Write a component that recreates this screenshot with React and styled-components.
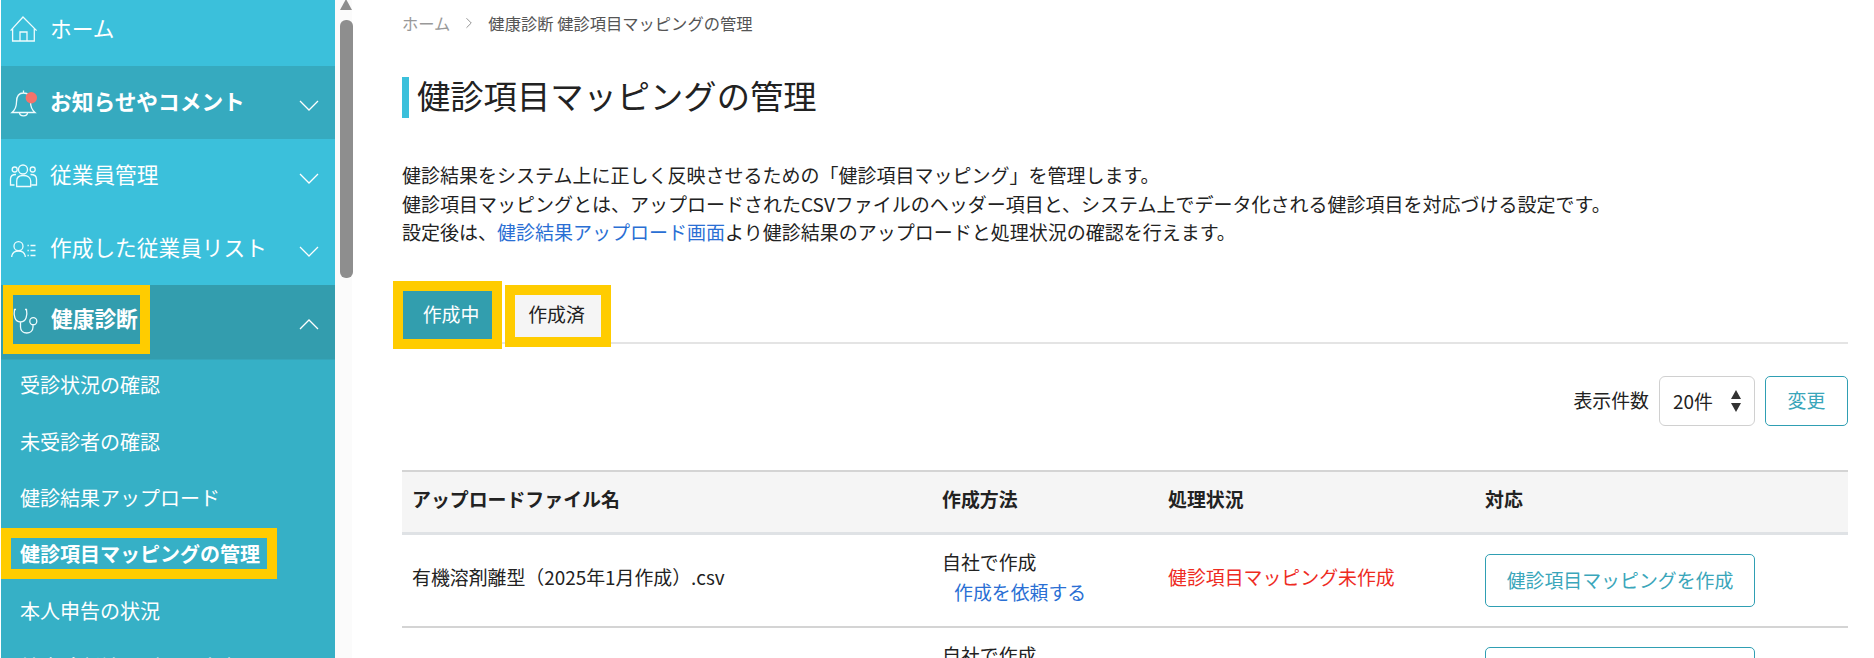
import React from 'react';
import styled, { createGlobalStyle } from 'styled-components';
import { ChevronRight } from 'lucide-react';

const GlobalStyle = createGlobalStyle`
    html, body {
        margin: 0;
        padding: 0;
        height: 658px;
        overflow: hidden;
        background: #fff;
        font-family: "Noto Sans CJK JP", "Noto Sans", sans-serif;
        color: #222;
    }
    * {
        box-sizing: border-box;
    }
`;

const Page = styled.div`
    display: flex;
    height: 658px;
    overflow: hidden;
    padding-left: 1px;
`;

const Sidebar = styled.nav`
    width: 334px;
    flex-shrink: 0;
    background: #3bc0db;
    overflow: hidden;
`;

const NavItem = styled.div`
    display: flex;
    align-items: center;
    height: ${props => props.height || 73}px;
    padding: 0 16px ${props => props.raise || 0}px 8px;
    color: #fff;
    font-size: 21.7px;
    font-weight: ${props => props.bold ? 700 : 400};
    background: ${props => props.background || 'transparent'};
`;

const NavIcon = styled.svg`
    width: 30px;
    height: 30px;
    flex-shrink: 0;
    margin-right: ${props => props.gap ?? 11}px;
    overflow: visible;
    fill: none;
    stroke: #eefbfd;
    stroke-width: 1.3;
`;

const NavLabel = styled.span`
    flex: 1;
    padding-bottom: 5px;
    white-space: nowrap;
`;

const Chevron = styled.svg`
    width: 20px;
    height: 11px;
    flex-shrink: 0;
    margin-top: 5px;
    fill: none;
    stroke: #fff;
    stroke-width: 1.3;
`;

const HighlightRow = styled.div`
    display: flex;
    align-items: center;
    flex: 1;
    height: 100%;
`;

const HighlightBox = styled.div`
    display: flex;
    align-items: center;
    border: 10px solid #ffcc00;
    width: 147px;
    height: 69px;
    margin: 0 0 5px -6px;
    white-space: nowrap;
`;

const SubList = styled.div`
    background: #36b0c6;
    border-top: 1px solid #35a6ba;
`;

const SubItem = styled.div`
    display: flex;
    align-items: center;
    height: 56.4px;
    padding: 0 0 7px 19px;
    color: #fff;
    font-size: 20px;
    white-space: nowrap;
`;

const SubHighlight = styled.span`
    border: 10px solid #ffcc00;
    margin-left: -19px;
    padding: 0 0 0 9px;
    width: 276px;
    height: 51px;
    display: flex;
    align-items: center;
    font-weight: 700;
    white-space: nowrap;
`;

const Scrollbar = styled.div`
    position: relative;
    width: 17px;
    flex-shrink: 0;
    background: #fbfbfb;
`;

const ScrollThumb = styled.div`
    position: absolute;
    top: 20px;
    left: 5px;
    width: 13px;
    height: 258px;
    background: #8e8e8e;
    border-radius: 6px;
`;

const ScrollArrow = styled.div`
    position: absolute;
    top: -1px;
    left: 5px;
    width: 0;
    height: 0;
    border-left: 6.5px solid transparent;
    border-right: 6.5px solid transparent;
    border-bottom: 11px solid #8e8e8e;
`;

const Main = styled.main`
    flex: 1;
    min-width: 0;
    padding: 11px 26px 0 50px;
`;

const Breadcrumb = styled.div`
    display: flex;
    align-items: center;
    height: 24px;
    font-size: 16.3px;
    color: #555;
`;

const CrumbHome = styled.span`
    color: #999;
`;

const CrumbArrow = styled.span`
    display: flex;
    margin: 0 10px;
    color: #888;
`;

const Title = styled.h1`
    margin: 42px 0 0;
    padding-left: 8px;
    height: 41px;
    line-height: 35px;
    border-left: 7px solid #3bc0db;
    font-size: 33.3px;
    font-weight: 400;
    color: #222;
`;

const Description = styled.p`
    margin: 43px 0 0;
    font-size: 19px;
    line-height: 28.6px;
    white-space: nowrap;
`;

const Link = styled.a`
    color: #2a6fd4;
    text-decoration: none;
`;

const Tabs = styled.div`
    display: flex;
    align-items: flex-start;
    height: 63px;
    margin: 34px 0 0 -9px;
    border-bottom: 2px solid #e4e4e4;
`;

const Tab = styled.div`
    display: flex;
    align-items: center;
    justify-content: center;
    flex-shrink: 0;
    border: 10px solid #ffcc00;
    width: ${props => props.active ? 109 : 106}px;
    height: ${props => props.active ? 68 : 62}px;
    margin: ${props => props.active ? '0 3px 0 0' : '4px 0 0'};
    padding: ${props => props.active ? '0 0 2px 7px' : '0 3px 5px 0'};
    font-size: 18.9px;
    color: ${props => props.active ? '#fff' : '#222'};
    background: ${props => props.active ? '#329eae' : '#f5f5f5'};
`;

const PagerRow = styled.div`
    display: flex;
    justify-content: flex-end;
    align-items: center;
    gap: 10px;
    margin-top: 32px;
    height: 50px;
`;

const PagerLabel = styled.span`
    font-size: 18.9px;
    padding-bottom: 2px;
`;

const SelectBox = styled.div`
    display: flex;
    align-items: center;
    justify-content: space-between;
    width: 96px;
    height: 50px;
    padding: 0 12px 0 13px;
    border: 1px solid #d0d0d0;
    border-radius: 6px;
    font-size: 18.9px;
`;

const OutlineButton = styled.button`
    display: block;
    height: ${props => props.height || 53}px;
    width: ${props => props.width || 270}px;
    padding: 0 0 3px;
    background: #fff;
    border: 1px solid #2f9fb3;
    border-radius: 5px;
    color: #3aa6ba;
    font-family: inherit;
    font-size: 18.9px;
`;

const Table = styled.table`
    width: 100%;
    margin-top: 44px;
    border-collapse: collapse;
    table-layout: fixed;
    font-size: 18.9px;
`;

const Th = styled.th`
    width: ${props => props.width ? props.width + 'px' : 'auto'};
    height: 63px;
    padding: 0 10px 8px;
    background: #f5f5f5;
    border-top: 2px solid #d4d4d4;
    border-bottom: 3px solid #dfe2e5;
    text-align: left;
    font-weight: 700;
`;

const Td = styled.td`
    height: 93px;
    padding: 0 10px ${props => props.flush ? 0 : 7}px;
    border-bottom: 2px solid #d4d4d4;
    vertical-align: middle;
    line-height: 30px;
`;

const RequestLink = styled(Link)`
    display: block;
    padding-left: 12px;
`;

const StatusText = styled.span`
    color: #ee2b1f;
`;

const HomeIcon = () => (
    <NavIcon viewBox="0 0 30 30">
        <path d="M1.6 15.6 L14 2 L27.6 15.6 M3.6 13.5 V26 H25.3 V13.5 M11 26 V17 H18 V26" />
    </NavIcon>
);

const BellIcon = () => (
    <NavIcon viewBox="0 0 30 30">
        <path d="M3 24.5 C6 22 7.5 19 7.5 14 C7.5 8 10 5 14.5 5 C19 5 21.5 8 21.5 14 C21.5 19 23 22 26 24.5 Z M14.5 5 V2.5 M10.5 24.5 C10.5 29 18.5 29 18.5 24.5" />
        <circle cx="22.3" cy="9.8" r="5.7" fill="#f4736b" stroke="none" />
    </NavIcon>
);

const UsersIcon = () => (
    <NavIcon viewBox="0 0 30 30">
        <circle cx="14" cy="8.5" r="4.5" />
        <circle cx="5.7" cy="8.5" r="2.5" />
        <circle cx="23.7" cy="8.5" r="2.5" />
        <path d="M7.7 25.5 V20 C7.7 16 10 14.5 14 14.5 C18 14.5 21.7 16 21.7 20 V25.5 Z M5.5 24 H1.5 V18 C1.5 15 3 13.5 7 13.5 M22.5 24 H27.5 V18 C27.5 15 26 13.5 21.5 13.5" />
    </NavIcon>
);

const ListIcon = () => (
    <NavIcon viewBox="0 0 30 30">
        <circle cx="9.5" cy="12.2" r="4.5" />
        <path d="M2.7 23 C3 19 5.5 17 9.5 17 C13.5 17 16 19 16.3 23 M18.5 11.5 H19.8 M21.5 11.5 H26.5 M18.5 16.5 H19.8 M21.5 16.5 H26.5 M18.5 21.5 H19.8 M21.5 21.5 H26.5" />
    </NavIcon>
);

const StethoscopeIcon = () => (
    <NavIcon viewBox="0 0 30 30" gap={8}>
        <path d="M3 4.5 H1.5 C0.5 10 1.5 17 7.5 17 C13.5 17 14.5 10 13.5 4.5 H12 M7.5 17 V22 C7.5 30 20 30 20 22 V19.7" />
        <circle cx="20.3" cy="16.2" r="3.5" />
    </NavIcon>
);

const DownChevron = () => (
    <Chevron viewBox="0 0 20 11"><path d="M1 1 L10 10 L19 1" /></Chevron>
);

const UpChevron = () => (
    <Chevron viewBox="0 0 20 11"><path d="M1 10 L10 1 L19 10" /></Chevron>
);

const navItems = [
    { label: 'ホーム', icon: <HomeIcon />, height: 66, raise: 6 },
    { label: 'お知らせやコメント', icon: <BellIcon />, bold: true, background: '#36aabf', chevron: true },
    { label: '従業員管理', icon: <UsersIcon />, chevron: true },
    { label: '作成した従業員リスト', icon: <ListIcon />, chevron: true },
];

const subItems = ['受診状況の確認', '未受診者の確認', '健診結果アップロード', '健診項目マッピングの管理', '本人申告の状況', '健康診断結果データ出力'];

const TableRow = () => (
    <tr>
        <Td>有機溶剤離型（2025年1月作成）.csv</Td>
        <Td>
            自社で作成
            <RequestLink>作成を依頼する</RequestLink>
        </Td>
        <Td><StatusText>健診項目マッピング未作成</StatusText></Td>
        <Td flush><OutlineButton>健診項目マッピングを作成</OutlineButton></Td>
    </tr>
);

export default function App() {
    return (
        <Page>
            <GlobalStyle />
            <Sidebar>
                {navItems.map(item => (
                    <NavItem key={item.label} height={item.height} raise={item.raise} bold={item.bold} background={item.background}>
                        {item.icon}
                        <NavLabel>{item.label}</NavLabel>
                        {item.chevron && <DownChevron />}
                    </NavItem>
                ))}
                <NavItem background="#339dae" height={74} bold>
                    <HighlightRow>
                        <HighlightBox>
                            <StethoscopeIcon />
                            <NavLabel>健康診断</NavLabel>
                        </HighlightBox>
                    </HighlightRow>
                    <UpChevron />
                </NavItem>
                <SubList>
                    {subItems.map(label => (
                        <SubItem key={label}>
                            {label === '健診項目マッピングの管理'
                                ? <SubHighlight>{label}</SubHighlight>
                                : label}
                        </SubItem>
                    ))}
                </SubList>
            </Sidebar>
            <Scrollbar>
                <ScrollArrow />
                <ScrollThumb />
            </Scrollbar>
            <Main>
                <Breadcrumb>
                    <CrumbHome>ホーム</CrumbHome>
                    <CrumbArrow><ChevronRight size={18} strokeWidth={1.2} /></CrumbArrow>
                    健康診断&nbsp;健診項目マッピングの管理
                </Breadcrumb>
                <Title>健診項目マッピングの管理</Title>
                <Description>
                    健診結果をシステム上に正しく反映させるための「健診項目マッピング」を管理します。<br />
                    健診項目マッピングとは、アップロードされたCSVファイルのヘッダー項目と、システム上でデータ化される健診項目を対応づける設定です。<br />
                    設定後は、<Link>健診結果アップロード画面</Link>より健診結果のアップロードと処理状況の確認を行えます。
                </Description>
                <Tabs>
                    <Tab active>作成中</Tab>
                    <Tab>作成済</Tab>
                </Tabs>
                <PagerRow>
                    <PagerLabel>表示件数</PagerLabel>
                    <SelectBox>
                        20件
                        <svg width="12" height="24" viewBox="0 0 12 24" fill="#333">
                            <path d="M6 1 L11 10 H1 Z M1 14 H11 L6 23 Z" />
                        </svg>
                    </SelectBox>
                    <OutlineButton width={83} height={50}>変更</OutlineButton>
                </PagerRow>
                <Table>
                    <thead>
                        <tr>
                            <Th width={530}>アップロードファイル名</Th>
                            <Th width={226}>作成方法</Th>
                            <Th width={317}>処理状況</Th>
                            <Th>対応</Th>
                        </tr>
                    </thead>
                    <tbody>
                        <TableRow />
                        <TableRow />
                    </tbody>
                </Table>
            </Main>
        </Page>
    );
}
